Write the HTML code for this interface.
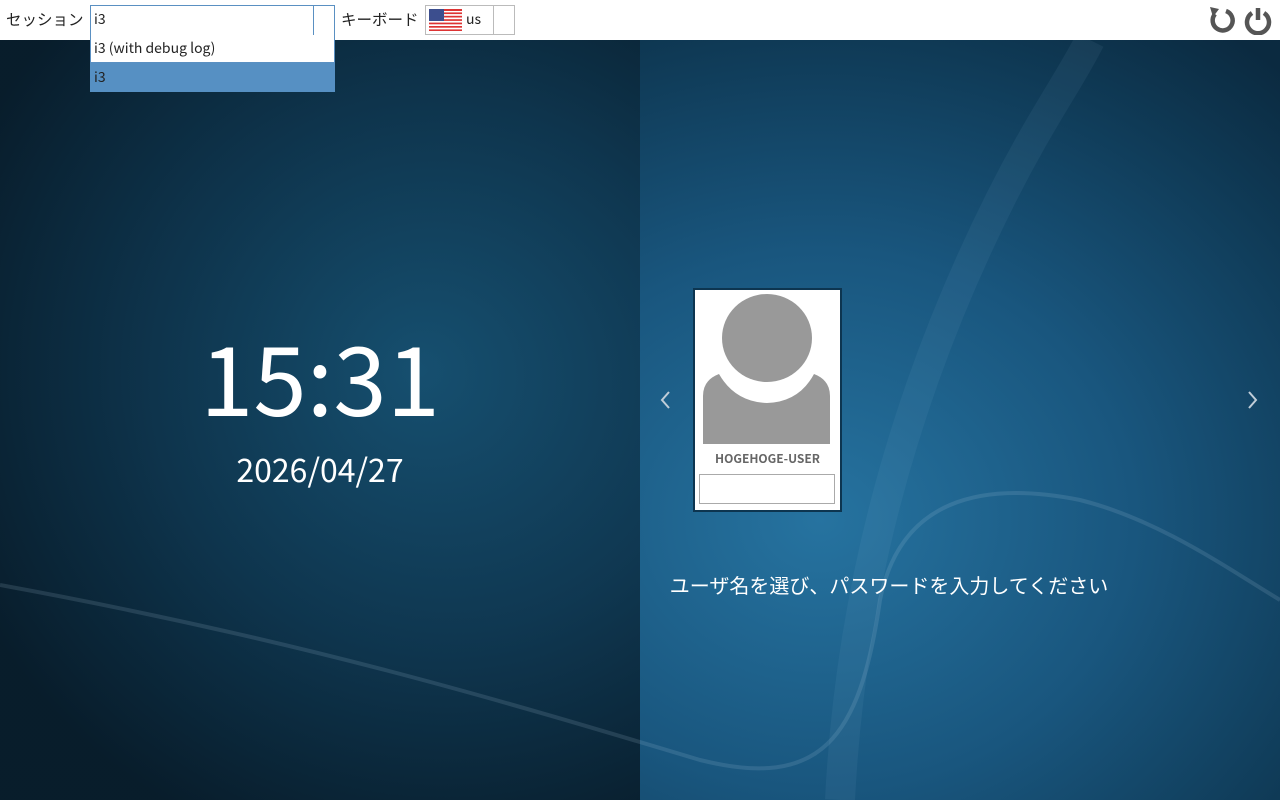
<!DOCTYPE html>
<html><head><meta charset="utf-8"><style>
*{margin:0;padding:0;box-sizing:border-box}
body{width:1280px;height:800px;overflow:hidden;position:relative;font-family:"Noto Sans CJK JP","Liberation Sans",sans-serif;
background:radial-gradient(ellipse 700px 600px at 820px 520px,#2673a0 0%,#19567e 45%,#0f3a56 80%,#0b2a40 100%);}
.left{position:absolute;left:0;top:40px;width:640px;height:760px;background:radial-gradient(ellipse 500px 500px at 420px 330px,rgba(22,80,112,.9) 0%,rgba(14,52,76,.9) 55%,rgba(8,28,42,.95) 100%);}
.bar{position:absolute;left:0;top:0;width:1280px;height:40px;background:#fff;font-size:15.5px;color:#222}
.t{position:absolute;white-space:nowrap}
</style></head><body>
<div class="left"></div>
<svg style="position:absolute;left:0;top:0" width="1280" height="800">
<path d="M0 585 C300 640 500 700 700 760 C820 790 860 740 880 600 C900 500 980 480 1080 500 C1160 520 1230 570 1280 600" fill="none" stroke="rgba(180,210,230,.15)" stroke-width="4"/>
<path d="M840 800 C850 600 900 400 1000 200 C1040 120 1070 80 1090 40" fill="none" stroke="rgba(160,200,225,.07)" stroke-width="30"/>
</svg>
<div class="bar">
<div class="t" style="left:6px;top:8px">セッション</div>
<div style="position:absolute;left:90px;top:5px;width:245px;height:31px;border:1px solid #5a90c2;background:#fff"></div>
<div style="position:absolute;left:313px;top:5px;width:1px;height:31px;background:#5a90c2"></div>
<div class="t" style="left:94px;top:9px;font-size:14px">i3</div>
<div class="t" style="left:341px;top:8px">キーボード</div>
<div style="position:absolute;left:425px;top:5px;width:90px;height:30px;border:1px solid #bbb"></div>
<div style="position:absolute;left:493px;top:5px;width:1px;height:30px;background:#bbb"></div>
<svg style="position:absolute;left:429px;top:9px" width="33" height="22"><rect width="33" height="22" fill="#fff"/><g fill="#d33"><rect y="0" width="33" height="2"/><rect y="3.4" width="33" height="1.7"/><rect y="6.8" width="33" height="1.7"/><rect y="10.2" width="33" height="1.7"/><rect y="13.6" width="33" height="1.7"/><rect y="17" width="33" height="1.7"/><rect y="20.4" width="33" height="1.6"/></g><rect width="15" height="12" fill="#3c4e8e"/></svg>
<div class="t" style="left:466px;top:9px;font-size:14px">us</div>
<svg style="position:absolute;left:1205px;top:5px" width="70" height="30"><g fill="none" stroke="#555" stroke-width="4.5"><path d="M10 9 A10 10 0 1 0 21 6"/><path d="M47 8 A11 11 0 1 0 59 8"/><path d="M53 3 V15"/></g><path d="M5 2 L14 4 L8 12 Z" fill="#555"/></svg>
</div>
<div style="position:absolute;left:90px;top:35px;width:245px;height:28px;background:#fff;border:1px solid #5a90c2;border-top:none"></div>
<div class="t" style="left:94px;top:38px;font-size:14px;color:#222">i3 (with debug log)</div>
<div style="position:absolute;left:90px;top:63px;width:245px;height:29px;background:#5690c3"></div>
<div class="t" style="left:94px;top:67px;font-size:14px;color:#222">i3</div>

<div class="t" style="left:0;width:640px;text-align:center;top:305px;font-size:96px;line-height:140px;color:#fff">15:31</div>
<div class="t" style="left:0;width:640px;text-align:center;top:446px;font-size:32px;line-height:46px;color:#fff">2026/04/27</div>

<div style="position:absolute;left:693px;top:288px;width:149px;height:224px;background:#fff;border:2px solid #0d3550"></div>
<svg style="position:absolute;left:695px;top:290px" width="145" height="160"><ellipse cx="72" cy="48" rx="45" ry="44" fill="#999"/><path d="M8 160 V112 Q8 96 24 90 Q40 118 72 119 Q104 118 119 90 Q135 96 135 112 V160Z" fill="#999" transform="translate(0,-6)"/></svg>
<div class="t" style="left:693px;width:149px;text-align:center;top:450px;font-size:12px;font-weight:bold;color:#666">HOGEHOGE-USER</div>
<div style="position:absolute;left:699px;top:474px;width:136px;height:30px;border:1px solid #aaa;background:#fff"></div>
<svg style="position:absolute;left:658px;top:390px" width="14" height="22"><path d="M11 2 L4 10 L11 18" fill="none" stroke="#c0cdd8" stroke-width="2"/></svg>
<svg style="position:absolute;left:1246px;top:390px" width="14" height="22"><path d="M3 2 L10 10 L3 18" fill="none" stroke="#c0cdd8" stroke-width="2"/></svg>
<div class="t" style="left:640px;width:498px;text-align:center;top:570px;font-size:20px;color:#fff">ユーザ名を選び、パスワードを入力してください</div>
</body></html>
